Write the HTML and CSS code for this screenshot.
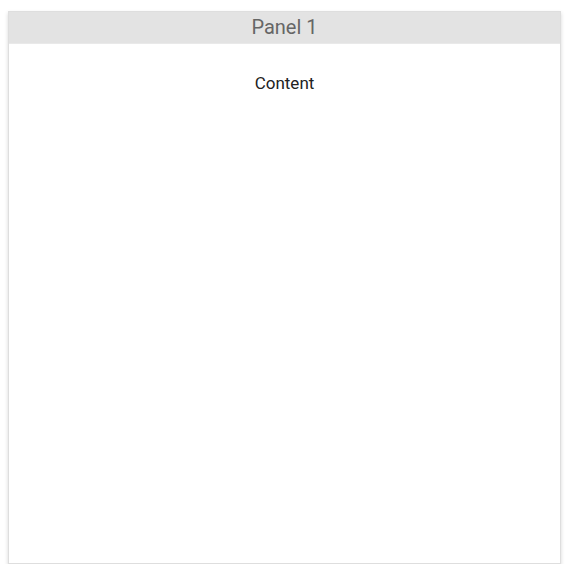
FILE: index.html
```html
<!DOCTYPE html>
<html>
<head>
<meta charset="utf-8">
<link rel="stylesheet" href="styles.css">
</head>
<body>
<div class="panel">
  <div class="panel-header">Panel 1</div>
  <div class="panel-body">Content</div>
</div>
</body>
</html>
```
FILE: styles.css
```css
html, body { margin: 0; padding: 0; background: #fff; }
body { padding: 11px 0 0 8px; font-family: Roboto, "Noto Sans", sans-serif; }
.panel {
  width: 553px;
  height: 553px;
  box-sizing: border-box;
  background: #fff;
  border: 1px solid #dedede;
  box-shadow: 0 2px 4px rgba(0,0,0,0.16);
  display: flex;
  flex-direction: column;
}
.panel-header {
  height: 31px;
  background: #e3e3e3;
  color: #666;
  font-size: 20px;
  line-height: 31px;
  text-align: center;
  border-bottom: 1px solid #e9e9e9;
}
.panel-body {
  padding-top: 28px;
  text-align: center;
  font-size: 17px;
  color: #222;
  line-height: 22px;
}
```
